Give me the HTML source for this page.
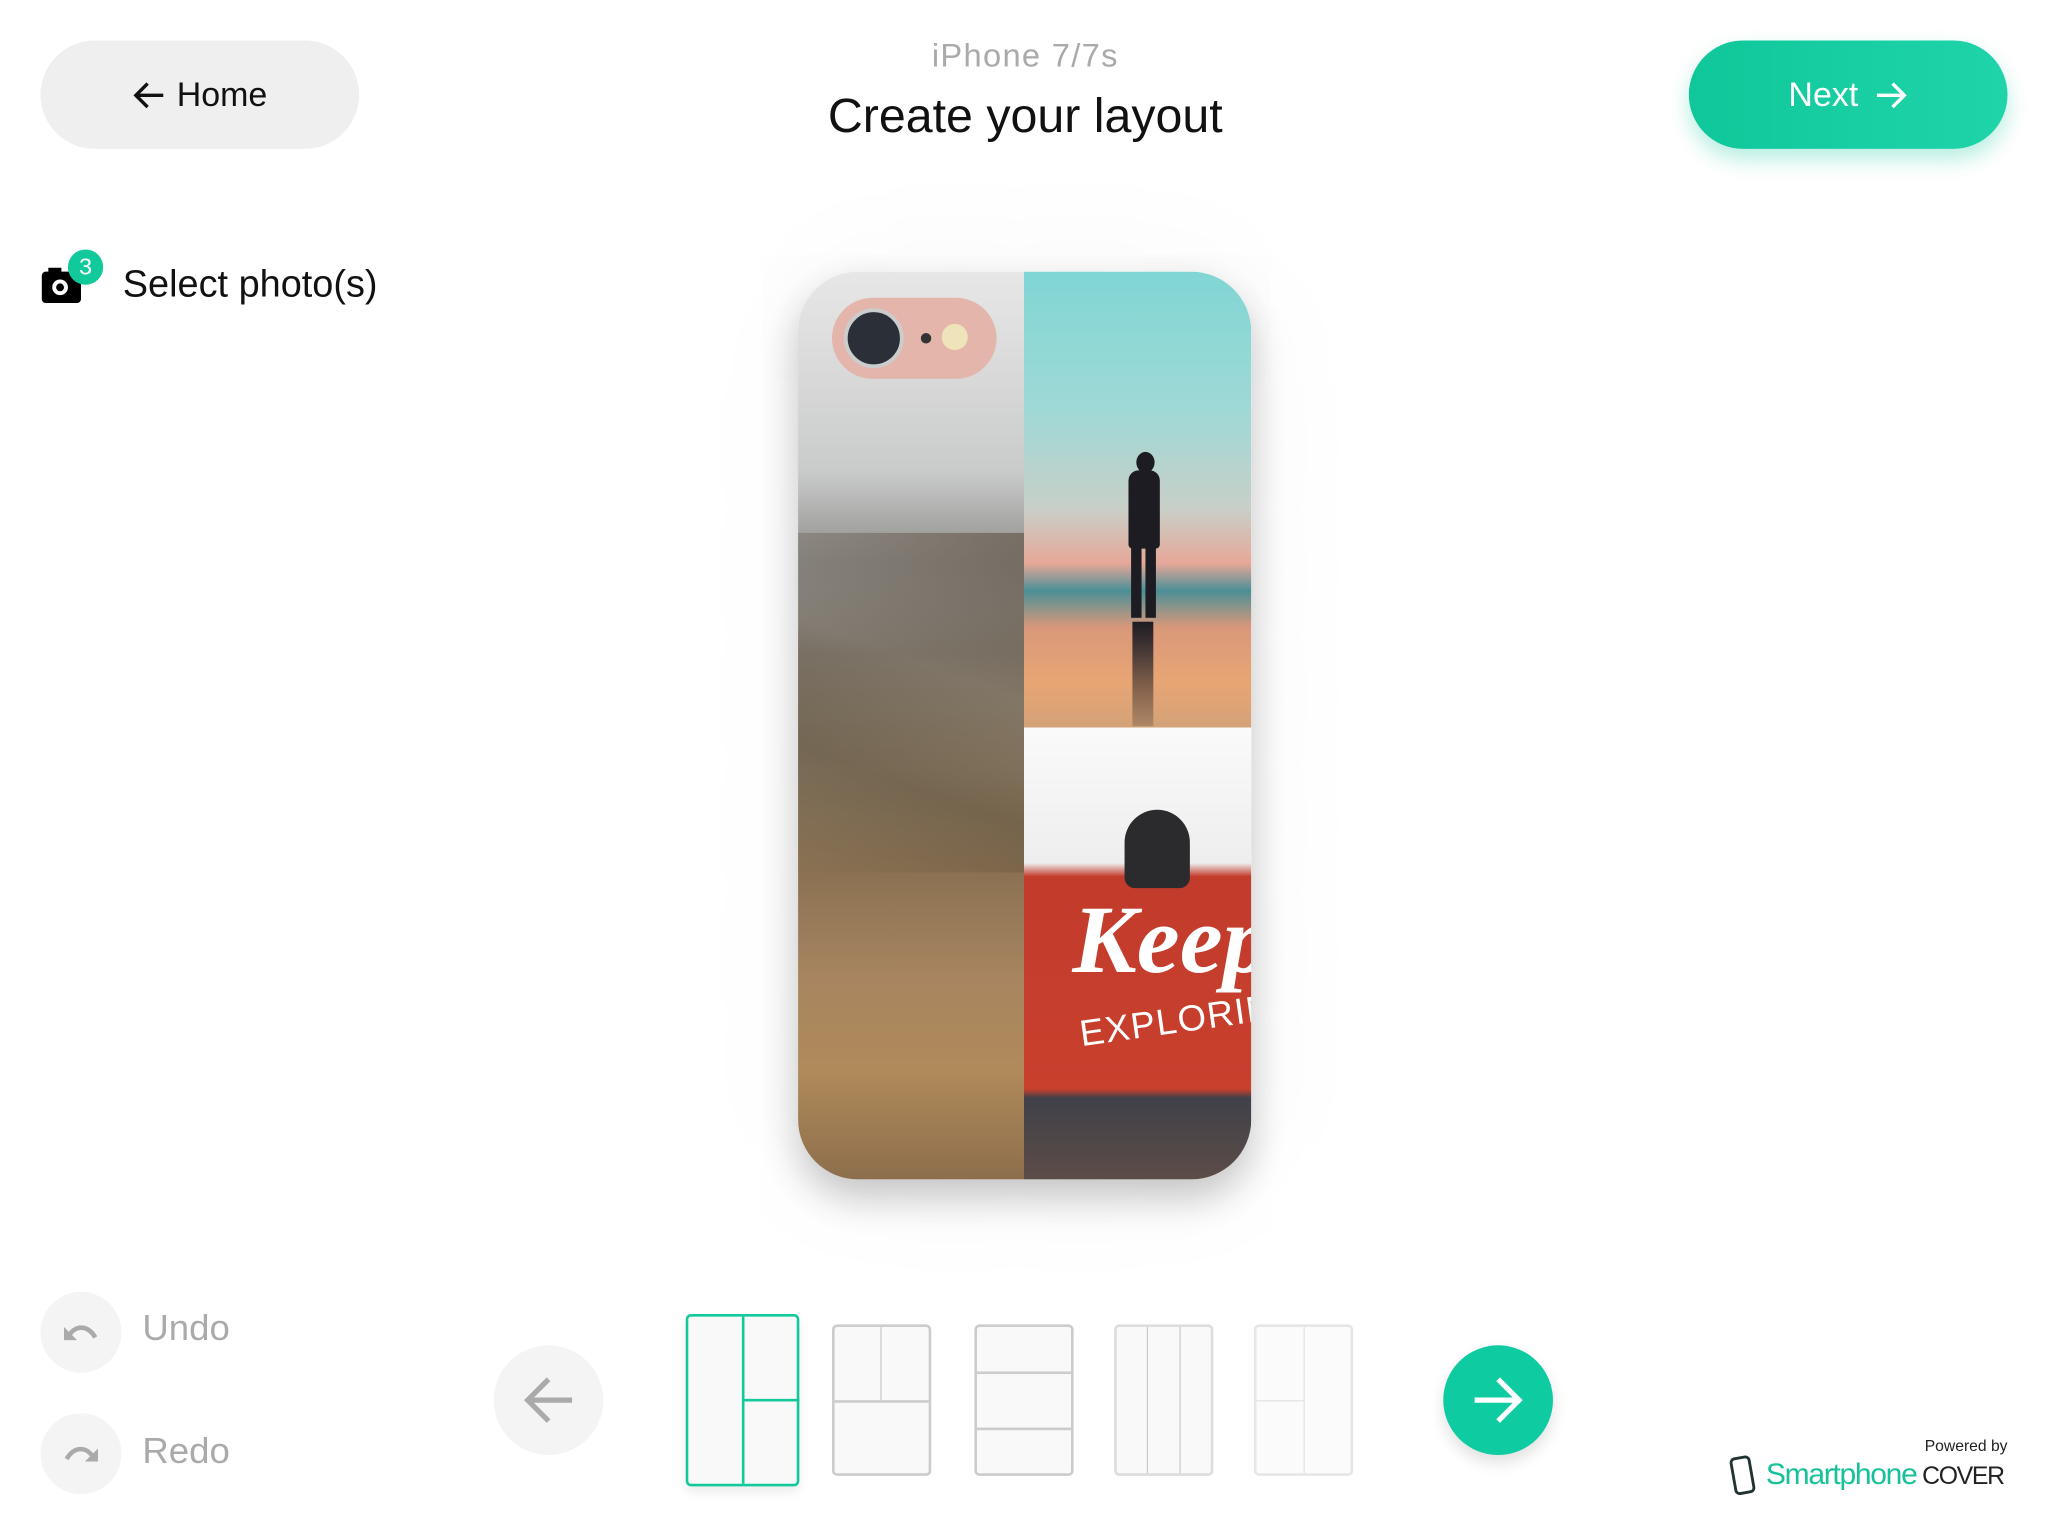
<!DOCTYPE html>
<html><head><meta charset="utf-8"><style>
html,body{margin:0;padding:0;background:#fff;overflow:hidden}
body{width:2048px;height:1536px;position:relative}
#w{position:absolute;left:0;top:0;width:1568px;height:1176px;transform:scale(1.30612);transform-origin:0 0;font-family:"Liberation Sans",sans-serif}
.a{position:absolute}
.btn{border-radius:42px;display:flex;align-items:center;justify-content:center;font-size:26px}
.thumb{position:absolute;background:#f9f9f9;border:2px solid #ccc;border-radius:4px;box-sizing:border-box}
.l{position:absolute;background:#ccc}
</style></head><body><div id="w">
<div class="a btn" style="left:31px;top:31px;width:244px;height:83px;background:#efefef;color:#111">
<svg width="26" height="24" viewBox="0 0 26 24" style="margin-right:8px"><path d="M24 12H3M12 3L3 12l9 9" stroke="#111" stroke-width="2.6" fill="none"/></svg>Home</div>
<div class="a" style="left:585px;width:400px;top:29px;text-align:center;color:#aaa;font-size:25px;letter-spacing:1px">iPhone 7/7s</div>
<div class="a" style="left:535px;width:500px;top:68px;text-align:center;color:#111;font-size:37px">Create your layout</div>
<div class="a btn" style="left:1293px;top:31px;width:244px;height:83px;background:linear-gradient(90deg,#0fc79a,#20d4aa);color:#fff;box-shadow:0 8px 16px rgba(15,199,154,.3)">Next<svg width="26" height="24" viewBox="0 0 26 24" style="margin-left:12px"><path d="M2 12h21M14 3l9 9-9 9" stroke="#fff" stroke-width="2.6" fill="none"/></svg></div>

<svg class="a" style="left:31px;top:203px" width="34" height="30" viewBox="0 0 34 30"><rect x="1" y="5" width="30" height="24" rx="3" fill="#000"/><rect x="6" y="2" width="10" height="6" fill="#000"/><circle cx="15" cy="17" r="6" fill="#fff"/><circle cx="15" cy="17" r="3" fill="#000"/></svg>
<div class="a" style="left:52px;top:191px;width:27px;height:27px;border-radius:50%;background:#12c99b;color:#fff;font-size:18px;text-align:center;line-height:27px">3</div>
<div class="a" style="left:94px;top:202px;font-size:29px;color:#111">Select photo(s)</div>

<div class="a" style="left:611px;top:208px;width:347px;height:695px;border-radius:46px;overflow:hidden;box-shadow:0 14px 30px rgba(0,0,0,.22),0 0 120px rgba(0,0,0,.06)">
 <div class="a" style="left:0;top:0;width:173px;height:695px;background:linear-gradient(180deg,#e7e7e7 0,#d8d8d8 12%,#c9cbcb 22%,#8f8e8a 32%,#7d7468 42%,#8a7a62 55%,#8a7152 66%,#a88560 78%,#b08a5a 88%,#8d6e4c 100%)"></div>
 <div class="a" style="left:0;top:200px;width:173px;height:260px;background:linear-gradient(200deg,rgba(90,75,60,.6) 0,transparent 40%,rgba(70,60,45,.3) 70%,transparent)"></div>
 <div class="a" style="left:173px;top:0;width:174px;height:349px;background:linear-gradient(180deg,#80d6d4 0,#9ed9d6 30%,#c8cfc8 52%,#e6a898 64%,#4b8f97 70%,#d9987a 78%,#e8a574 90%,#d3a278 100%)"></div>
 <div class="a" style="left:259px;top:138px;width:14px;height:16px;background:#1c1c22;border-radius:50%"></div>
 <div class="a" style="left:253px;top:152px;width:24px;height:60px;background:#1c1c22;border-radius:8px 8px 3px 3px"></div>
 <div class="a" style="left:255px;top:205px;width:8px;height:60px;background:#1c1c22"></div>
 <div class="a" style="left:266px;top:205px;width:8px;height:60px;background:#1c1c22"></div>
 <div class="a" style="left:256px;top:268px;width:16px;height:80px;background:linear-gradient(#1c1c22,rgba(28,28,34,.2))"></div>
 <div class="a" style="left:173px;top:349px;width:174px;height:346px;background:linear-gradient(180deg,#fafafa 0,#eeeeee 30%,#c23b2b 33%,#c9402d 80%,#40414a 82%,#5c4c47 100%)"></div>
 <div class="a" style="left:250px;top:412px;width:50px;height:60px;background:#2b2b2e;border-radius:25px 25px 8px 8px"></div>
 <div class="a" style="left:210px;top:470px;font-family:'Liberation Serif',serif;font-style:italic;font-weight:bold;font-size:74px;color:#fff">Keep</div>
 <div class="a" style="left:215px;top:556px;font-size:28px;color:#fff;transform:rotate(-8deg);letter-spacing:1px">EXPLORING</div>
 <div class="a" style="left:26px;top:20px;width:126px;height:62px;border-radius:31px;background:#e3b5ab"></div>
 <div class="a" style="left:35px;top:28px;width:46px;height:46px;border-radius:50%;background:#2a2f38;border:3px solid #ccc;box-sizing:border-box"></div>
 <div class="a" style="left:94px;top:47px;width:8px;height:8px;border-radius:50%;background:#333"></div>
 <div class="a" style="left:110px;top:40px;width:20px;height:20px;border-radius:50%;background:#efe3b9"></div>
</div>

<div class="a" style="left:31px;top:989px;width:62px;height:62px;border-radius:50%;background:#f4f4f4"></div>
<svg class="a" style="left:47px;top:1008px" width="30" height="24" viewBox="0 0 30 24"><path d="M5 16C10 6 20 6 26 16" stroke="#aaa" stroke-width="3.5" fill="none"/><path d="M2 8v10h10z" fill="#aaa"/></svg>
<div class="a" style="left:109px;top:1001px;font-size:28px;color:#aaa">Undo</div>
<div class="a" style="left:31px;top:1082px;width:62px;height:62px;border-radius:50%;background:#f4f4f4"></div>
<svg class="a" style="left:47px;top:1101px" width="30" height="24" viewBox="0 0 30 24"><path d="M25 16C20 6 10 6 4 16" stroke="#aaa" stroke-width="3.5" fill="none"/><path d="M28 8v10h-10z" fill="#aaa"/></svg>
<div class="a" style="left:109px;top:1095px;font-size:28px;color:#aaa">Redo</div>

<div class="a" style="left:378px;top:1030px;width:84px;height:84px;border-radius:50%;background:#f4f4f4"></div>
<svg class="a" style="left:398px;top:1050px" width="44" height="44" viewBox="0 0 44 44"><path d="M40 22H6M22 6L6 22l16 16" stroke="#aaa" stroke-width="4" fill="none"/></svg>

<div class="thumb" style="left:525px;top:1006px;width:87px;height:132px;border-color:#12c99b;box-shadow:0 4px 8px rgba(0,0,0,.08)"><div class="l" style="left:41px;top:0;width:2px;height:128px;background:#12c99b"></div><div class="l" style="left:43px;top:63px;width:42px;height:2px;background:#12c99b"></div></div>
<div class="thumb" style="left:637px;top:1014px;width:76px;height:116px"><div class="l" style="left:35px;top:0;width:1px;height:56px"></div><div class="l" style="left:0;top:56px;width:72px;height:2px"></div></div>
<div class="thumb" style="left:746px;top:1014px;width:76px;height:116px"><div class="l" style="left:0;top:34px;width:72px;height:2px"></div><div class="l" style="left:0;top:77px;width:72px;height:2px"></div></div>
<div class="thumb" style="left:853px;top:1014px;width:76px;height:116px;border-color:#ddd"><div class="l" style="left:23px;top:0;width:1px;height:112px"></div><div class="l" style="left:48px;top:0;width:1px;height:112px"></div></div>
<div class="thumb" style="left:960px;top:1014px;width:76px;height:116px;border-color:#e6e6e6;background:#fbfbfb"><div class="l" style="left:36px;top:0;width:1px;height:112px;background:#e3e3e3"></div><div class="l" style="left:0;top:56px;width:36px;height:1px;background:#e3e3e3"></div></div>

<div class="a" style="left:1105px;top:1030px;width:84px;height:84px;border-radius:50%;background:#0fcba1;box-shadow:0 6px 12px rgba(0,0,0,.12)"></div>
<svg class="a" style="left:1125px;top:1050px" width="44" height="44" viewBox="0 0 44 44"><path d="M4 22h34M22 6l16 16-16 16" stroke="#fff" stroke-width="4" fill="none"/></svg>

<div class="a" style="right:31px;top:1100px;font-size:12px;color:#222">Powered by</div>
<svg class="a" style="left:1323px;top:1114px" width="24" height="32" viewBox="0 0 24 32"><rect x="4" y="2" width="14" height="27" rx="3" transform="rotate(-10 11 15)" fill="none" stroke="#233" stroke-width="2.2"/></svg>
<div class="a" style="left:1352px;top:1115px;font-size:23px;letter-spacing:-1px;color:#17c19a">Smartphone<span style="color:#222;font-size:19px;letter-spacing:-1px"> COVER</span></div>
</div></body></html>
